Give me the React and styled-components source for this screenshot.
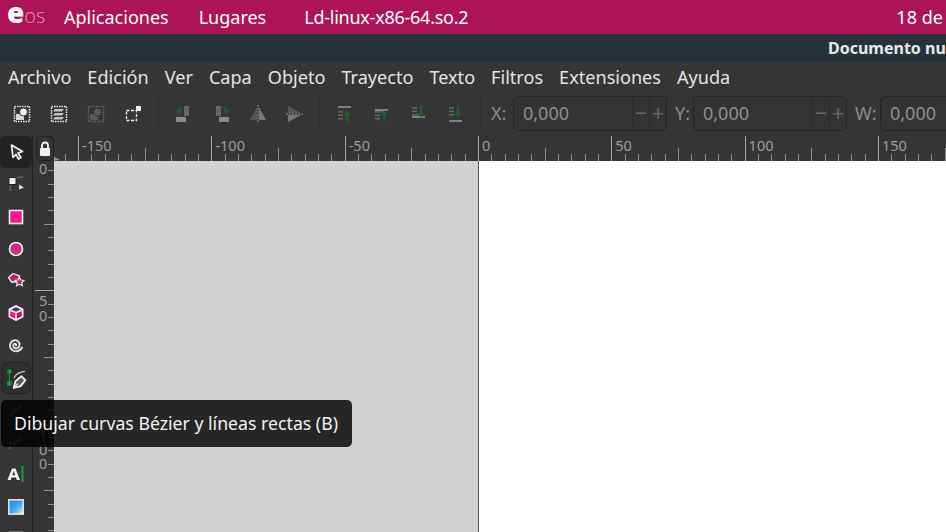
import React from "react";
import styled, { createGlobalStyle } from "styled-components";

const GlobalStyle = createGlobalStyle`
  html, body {
    margin: 0;
    padding: 0;
    height: 532px;
    overflow: hidden;
    background: #353535;
    font-family: "Noto Sans", "Open Sans", sans-serif;
  }
`;

const Page = styled.div`
  position: relative;
  width: 946px;
  height: 532px;
  overflow: hidden;
  display: flex;
  flex-direction: column;
`;

const TopBar = styled.div`
  height: 34px;
  flex: none;
  background: #ad1457;
  color: #fff;
  display: flex;
  align-items: center;
  padding-left: 7px;
  font-size: 18px;
  white-space: nowrap;
`;

const Logo = styled.div`
  width: 34px;
  height: 24px;
  align-self: flex-start;
  margin-right: 23px;
  display: flex;
  align-items: baseline;
  font-family: "Open Sans", sans-serif;
  font-size: 20px;
  font-weight: 300;
  line-height: 24px;
  color: #dc9ab8;
  b {
    color: #fff;
    font-size: 28px;
    font-weight: 800;
    line-height: 24px;
  }
`;

const TopItem = styled.span`
  margin-right: ${(p) => p.$gap}px;
  letter-spacing: ${(p) => p.$track || 0}px;
`;

const TitleBar = styled.div`
  height: 28px;
  flex: none;
  background: #263238;
  color: #e6e9ea;
  font-size: 16px;
  font-weight: 700;
  line-height: 28px;
  padding-left: 828px;
  white-space: nowrap;
`;

const MenuBar = styled.div`
  height: 29px;
  flex: none;
  display: flex;
  gap: 16px;
  align-items: center;
  padding-left: 8px;
  background: #353535;
  border-bottom: 1px solid #2f2f2f;
  color: #e4e4e4;
  font-size: 18.1px;
`;

const ToolBar = styled.div`
  height: 43px;
  flex: none;
  display: flex;
  align-items: center;
  padding-left: 3px;
  background: #353535;
  white-space: nowrap;
`;

const ToolButton = styled.div`
  width: 37px;
  height: 37px;
  flex: none;
  display: flex;
  align-items: center;
  justify-content: center;
`;

const ToolSep = styled.div`
  width: 1px;
  height: 35px;
  flex: none;
  background: #2f2f2f;
  margin: 0 6px 0 ${(p) => p.$left || 6}px;
`;

const CoordLabel = styled.span`
  color: #8c8c8c;
  font-size: 18px;
  line-height: 22px;
  margin-top: -2px;
  width: ${(p) => p.$width}px;
  flex: none;
  margin-left: ${(p) => p.$left || 0}px;
`;

const SpinBox = styled.div`
  width: 154px;
  height: 35px;
  flex: none;
  box-sizing: border-box;
  display: flex;
  align-items: center;
  border: 1px solid #252525;
  border-radius: 5px;
  background: #333;
  color: #8f8f8f;
  font-size: 18px;
  padding-left: 9px;
`;

const SpinValue = styled.span`
  flex: 1;
  margin-top: -2px;
`;

const SpinButton = styled.span`
  width: 16px;
  height: 33px;
  line-height: 31px;
  text-align: center;
  color: #666;
  font-size: 22px;
  border-left: 1px solid #2c2c2c;
`;

const Workspace = styled.div`
  flex: 1;
  min-height: 0;
  display: flex;
`;

const ToolColumn = styled.div`
  width: 32px;
  flex: none;
  display: flex;
  flex-direction: column;
  align-items: center;
  background: #353535;
  border-right: 1px solid #222;
`;

const SideTool = styled.div`
  width: ${(p) => (p.$active ? 30 : 32)}px;
  height: 32px;
  flex: none;
  box-sizing: border-box;
  display: flex;
  align-items: center;
  justify-content: center;
  margin-top: ${(p) => p.$top || 0}px;
  border-radius: 6px;
  background: ${(p) => (p.$selected ? "#232323" : p.$active ? "#2f2f2f" : "transparent")};
  border: ${(p) => (p.$active ? "1px solid #242424" : "none")};
`;

const RulerGrid = styled.div`
  flex: 1;
  min-width: 0;
  display: grid;
  grid-template-columns: 21px 1fr;
  grid-template-rows: 26px 1fr;
`;

const Corner = styled.div`
  display: flex;
  align-items: flex-start;
  padding: 1px 0 0 3px;
  background: #353535;
`;

const LockButton = styled.div`
  width: 19px;
  height: 25px;
  box-sizing: border-box;
  display: flex;
  align-items: center;
  justify-content: center;
  border: 1px solid #1f1f1f;
  border-radius: 5px;
  background: #333;
`;

const RulerSvg = styled.svg`
  display: block;
  background: #353535;
  font-family: "Noto Sans", sans-serif;
  font-size: 14.5px;
`;

const Canvas = styled.div`
  display: flex;
  min-height: 0;
`;

const Desk = styled.div`
  width: 424px;
  flex: none;
  background: #d1d1d1;
  border-right: 1px solid #555;
`;

const Sheet = styled.div`
  flex: 1;
  background: #fff;
`;

const Tooltip = styled.div`
  position: absolute;
  left: 1px;
  top: 400px;
  width: 351px;
  height: 47px;
  box-sizing: border-box;
  padding-left: 13px;
  line-height: 46px;
  border-radius: 5px;
  background: rgba(0, 0, 0, 0.82);
  color: #f2f2f2;
  font-size: 17.7px;
  white-space: nowrap;
`;

const W = "#ededed";
const D = "#666";
const G = "#1c5f28";

const Svg = ({ size = 20, children }) => (
  <svg width={size} height={size} viewBox="0 0 20 20">
    {children}
  </svg>
);

const Dotted = ({ c }) => (
  <rect x="2.500" y="2.500" width="15" height="15" fill="none" stroke={c} strokeWidth="1.500" strokeDasharray="1.500 1" />
);

const SelectAll = ({ c = W }) => (
  <Svg>
    <Dotted c={c} />
    <rect x="4" y="10" width="8" height="6" fill={c === W ? "#d8d8d8" : "#5a5a5a"} />
    <circle cx="11.500" cy="8" r="4" fill={c === W ? "#f2f2f2" : "#5a5a5a"} stroke="#353535" />
  </Svg>
);

const SelectLayers = () => (
  <Svg>
    <Dotted c={W} />
    <path d="M6 5h9l-2 2.500H4zM6 9h9l-2 2.500H4zM6 13h9l-2 2.500H4z" fill="#c4c4c4" />
  </Svg>
);

const Deselect = () => (
  <Svg>
    <rect x="3.500" y="6.500" width="10" height="10" fill="none" stroke={W} strokeWidth="1.300" strokeDasharray="3 1.500" />
    <rect x="13" y="2" width="5" height="5" fill={W} />
  </Svg>
);

const RotateCCW = () => (
  <Svg>
    <rect x="10" y="2" width="5" height="10" fill={D} />
    <rect x="2" y="13" width="10" height="5" fill="#8a8a8a" />
    <path d="M8.500 3.500C5.500 4 4.500 6 4.500 8M2.500 6.500l2 3 2.500-2.500" fill="none" stroke={G} strokeWidth="1.800" />
  </Svg>
);

const RotateCW = () => (
  <Svg>
    <rect x="5" y="2" width="5" height="10" fill={D} />
    <rect x="8" y="13" width="10" height="5" fill="#8a8a8a" />
    <path d="M11.500 3.500C14.500 4 15.500 6 15.500 8M13 6.500l2.500 3 2-2.500" fill="none" stroke={G} strokeWidth="1.800" />
  </Svg>
);

const FlipH = () => (
  <Svg>
    <path d="M9 3L2 16h7z" fill="#555" />
    <path d="M11 3l7 13h-7z" fill="#777" />
    <path d="M10 1v18" stroke="#999" strokeWidth="1" strokeDasharray="2 1" />
  </Svg>
);

const FlipV = () => (
  <Svg>
    <path d="M3 2l13 7H3z" fill="#555" />
    <path d="M3 11h13L3 18z" fill="#777" />
    <path d="M1 10h18" stroke="#999" strokeWidth="1" strokeDasharray="2 1" />
  </Svg>
);

const Align = ({ barY, arrowUp, small }) => {
  const rows = barY < 10 ? [7, 10.5, 14] : [3, 6.5, 10];
  return (
    <Svg>
      <rect x="3" y={barY} width="13" height="2" fill="#808080" />
      {rows.map((y, i) => (
        <rect key={y} x="3" y={y} width={i === (barY < 10 ? 0 : 2) && small ? 9 : 5} height="1.600" fill={D} />
      ))}
      {arrowUp ? (
        <path d="M12 18v-9M9.500 11L12 8l2.500 3" fill="none" stroke={G} strokeWidth="2" />
      ) : (
        <path d="M12 2v9M9.500 9l2.500 3 2.500-3" fill="none" stroke={G} strokeWidth="2" />
      )}
    </Svg>
  );
};

const SelectorIcon = () => (
  <Svg>
    <path d="M5.500 3l11 6.500-4.500 1.500 3 4.500-2.500 1.500-2.500-4.500L7 15.500z" fill="#353535" stroke="#f0f0f0" strokeWidth="1.700" strokeLinejoin="round" />
  </Svg>
);

const NodeIcon = () => (
  <Svg>
    <path d="M9 4.500C12 3 14 3 17 3" fill="none" stroke="#777" strokeWidth="1" />
    <path d="M4 17C4 14 4.500 12 5.500 10" fill="none" stroke="#777" strokeWidth="1" />
    <rect x="3" y="3.500" width="7" height="7" fill="#f0f0f0" stroke="#222" />
    <path d="M13 10.500l5 3-5 2z" fill="#ddd" />
  </Svg>
);

const RectIcon = () => (
  <Svg>
    <rect x="3.500" y="3.500" width="13" height="13" fill="#f7158a" stroke="#f0f0f0" strokeWidth="1.600" />
  </Svg>
);

const EllipseIcon = () => (
  <Svg>
    <circle cx="10" cy="10" r="6.500" fill="#c82b80" stroke="#f0f0f0" strokeWidth="1.600" />
  </Svg>
);

const StarIcon = () => (
  <Svg>
    <path d="M7 2.500l6.500 2.500L12 11H5.500L2.500 6.500z" fill="#b9266f" stroke="#f0f0f0" strokeWidth="1.300" />
    <path d="M13.500 6l1.500 3 3 .4-2.200 2.200.6 3.200-2.900-1.500-2.900 1.500.6-3.200-2.200-2.200 3-.4z" fill="#b9266f" stroke="#f0f0f0" strokeWidth="1.100" />
  </Svg>
);

const CubeIcon = () => (
  <Svg>
    <path d="M10 2l7.500 3.700v8.600L10 18l-7.500-3.700V5.700z" fill="#f0f0f0" />
    <path d="M10 4.200L14.800 6.500 10 8.800 5.200 6.500z" fill="#5d2a4a" />
    <path d="M4.200 8l5 2.300v5.500l-5-2.500z" fill="#f7158a" />
    <path d="M15.800 8l-5 2.300v5.500l5-2.500z" fill="#c01372" />
  </Svg>
);

const SpiralIcon = () => (
  <Svg>
    <path d="M10 10.500c1-1.500-1.500-2.500-2.500-.8-1.200 2 1 4.300 3.500 3.500 3-1 3.500-5 1-7C9.500 4 4.500 5.500 4 10c-.4 4 3 6.500 6.500 6.200 2.500-.2 4.500-1.700 5.500-3.700" fill="none" stroke="#e0e0e0" strokeWidth="1.900" strokeLinecap="round" />
  </Svg>
);

const PenIcon = () => (
  <Svg size={22}>
    <path d="M4 3.500C4 8 4 11 4 15.500" stroke="#1d9a35" strokeWidth="1" fill="none" />
    <circle cx="4" cy="4" r="2" fill="#12a32f" />
    <rect x="2" y="13" width="4" height="4" fill="#12a32f" />
    <path d="M8 10C10 6.500 13 4.500 18 4" stroke="#cfcfcf" strokeWidth="1" fill="none" />
    <path d="M8 19l1.500-6 5.500-4.500 3.500 3.500-4.500 5.500z" fill="#555" stroke="#ededed" strokeWidth="1.800" strokeLinejoin="round" />
    <path d="M8 19l4-4" stroke="#ededed" strokeWidth="1" />
  </Svg>
);

const PencilIcon = () => (
  <Svg>
    <path d="M4 16L15 5" stroke="#666" strokeWidth="3.500" />
    <path d="M3 6c1 2 2 3 2 5" stroke="#1d6a2a" strokeWidth="2" fill="none" />
  </Svg>
);

const CalligraphyIcon = () => (
  <Svg>
    <path d="M7 14L15 5" stroke="#5a5a5a" strokeWidth="3" />
    <path d="M3 10c2 2 2 5 0 7" stroke="#18802e" strokeWidth="2" fill="none" />
  </Svg>
);

const TextIcon = () => (
  <Svg>
    <path d="M1.500 16L6 4.500h3.500L14 16h-3.200l-.8-2.400H5.500L4.700 16zM6.300 11.200h2.900L7.750 7z" fill="#f0f0f0" />
    <rect x="15.500" y="2" width="2" height="16" fill="#12a32f" />
  </Svg>
);

const GradientIcon = () => (
  <Svg>
    <defs>
      <linearGradient id="grad-tool" x1="0" y1="0" x2="1" y2="1">
        <stop offset="0" stopColor="#1487e0" />
        <stop offset="0.55" stopColor="#45a8ea" />
        <stop offset="1" stopColor="#e3f2fb" />
      </linearGradient>
    </defs>
    <rect x="2.800" y="2.800" width="14.400" height="14.400" fill="url(#grad-tool)" stroke="#f0f0f0" strokeWidth="1.400" />
  </Svg>
);

const LockIcon = () => (
  <svg width="12" height="16" viewBox="0 0 12 16">
    <path d="M3 7V4.500a3 3 0 0 1 6 0V7" fill="none" stroke="#f2f2f2" strokeWidth="1.800" />
    <rect x="1" y="7" width="10" height="8" rx="1" fill="#f2f2f2" />
  </svg>
);

const HorizontalRuler = () => {
  const zero = 424;
  const step = 40 / 3;
  const ticks = [];
  for (let i = -32; i <= 36; i++) {
    const x = Math.round(zero + i * step) + 0.5;
    const major = i % 10 === 0;
    const mid = i % 5 === 0;
    const top = major ? 1 : mid ? 13 : 19;
    ticks.push(<path key={i} d={`M${x} ${top}V26`} stroke={major ? "#a8a8a8" : "#8f8f8f"} strokeWidth="1" />);
  }
  const labels = [-150, -100, -50, 0, 50, 100, 150];
  return (
    <RulerSvg width="892" height="26">
      {ticks}
      {labels.map((n) => (
        <text key={n} x={zero + (n / 50) * 133.3 + 4} y="16" fill="#9c9c9c">
          {n}
        </text>
      ))}
      <path d="M0 26V21l7 4z" fill="#8f8f8f" transform="translate(-1 0)" />
    </RulerSvg>
  );
};

const VerticalRuler = () => {
  const zero = -4; // y of the 0 mark, measured from the top of the canvas row
  const step = 40 / 3;
  const ticks = [];
  for (let i = 0; i <= 28; i++) {
    const y = Math.round(zero + i * step) + 0.5;
    const major = i % 10 === 0;
    const mid = i % 5 === 0;
    const left = major ? 2 : mid ? 11 : 15;
    ticks.push(<path key={i} d={`M${left} ${y}H21`} stroke={major ? "#a8a8a8" : "#8f8f8f"} strokeWidth="1" />);
  }
  const labels = [
    ["0", 13],
    ["5", 145],
    ["0", 160],
    ["1", 280],
    ["0", 294],
    ["0", 308],
  ];
  return (
    <RulerSvg width="21" height="371">
      {ticks}
      {labels.map(([t, y]) => (
        <text key={y} x="6" y={y} fill="#9c9c9c">
          {t}
        </text>
      ))}
    </RulerSvg>
  );
};

const MENU = ["Archivo", "Edición", "Ver", "Capa", "Objeto", "Trayecto", "Texto", "Filtros", "Extensiones", "Ayuda"];

const SIDE_TOOLS = [
  { icon: <SelectorIcon />, selected: true, top: 1 },
  { icon: <NodeIcon /> },
  { icon: <RectIcon />, top: 1 },
  { icon: <EllipseIcon /> },
  { icon: <StarIcon /> },
  { icon: <CubeIcon /> },
  { icon: <SpiralIcon /> },
  { icon: <PenIcon />, active: true, top: 1 },
  { icon: <PencilIcon /> },
  { icon: <CalligraphyIcon /> },
  { icon: <TextIcon /> },
  { icon: <GradientIcon />, top: 1 },
  { icon: <RectIcon /> },
];

const Spin = () => (
  <SpinBox>
    <SpinValue>0,000</SpinValue>
    <SpinButton>−</SpinButton>
    <SpinButton>+</SpinButton>
  </SpinBox>
);

export default function App() {
  return (
    <Page>
      <GlobalStyle />
      <TopBar>
        <Logo>
          <b>e</b>os
        </Logo>
        <TopItem $gap={30}>Aplicaciones</TopItem>
        <TopItem $gap={38}>Lugares</TopItem>
        <TopItem $gap={428} $track={-0.25}>Ld-linux-x86-64.so.2</TopItem>
        <TopItem $gap={0}>18 de ago</TopItem>
      </TopBar>
      <TitleBar>Documento nuevo 1 - Inkscape</TitleBar>
      <MenuBar>
        {MENU.map((m) => (
          <span key={m}>{m}</span>
        ))}
      </MenuBar>
      <ToolBar>
        <ToolButton><SelectAll /></ToolButton>
        <ToolButton><SelectLayers /></ToolButton>
        <ToolButton><SelectAll c="#666" /></ToolButton>
        <ToolButton><Deselect /></ToolButton>
        <ToolSep $left={7} />
        <ToolButton><RotateCCW /></ToolButton>
        <ToolButton><RotateCW /></ToolButton>
        <ToolButton><FlipH /></ToolButton>
        <ToolButton><FlipV /></ToolButton>
        <ToolSep />
        <ToolButton><Align barY={2} arrowUp /></ToolButton>
        <ToolButton><Align barY={5} arrowUp small /></ToolButton>
        <ToolButton><Align barY={12} small /></ToolButton>
        <ToolButton><Align barY={16} /></ToolButton>
        <ToolSep />
        <CoordLabel $width={22} $left={4}>X:</CoordLabel>
        <Spin />
        <CoordLabel $width={18} $left={8}>Y:</CoordLabel>
        <Spin />
        <CoordLabel $width={25} $left={8}>W:</CoordLabel>
        <Spin />
      </ToolBar>
      <Workspace>
        <ToolColumn>
          {SIDE_TOOLS.map((t, i) => (
            <SideTool key={i} $selected={t.selected} $active={t.active} $top={t.top}>
              {t.icon}
            </SideTool>
          ))}
        </ToolColumn>
        <RulerGrid>
          <Corner>
            <LockButton>
              <LockIcon />
            </LockButton>
          </Corner>
          <HorizontalRuler />
          <VerticalRuler />
          <Canvas>
            <Desk />
            <Sheet />
          </Canvas>
        </RulerGrid>
      </Workspace>
      <Tooltip>Dibujar curvas Bézier y líneas rectas (B)</Tooltip>
    </Page>
  );
}
